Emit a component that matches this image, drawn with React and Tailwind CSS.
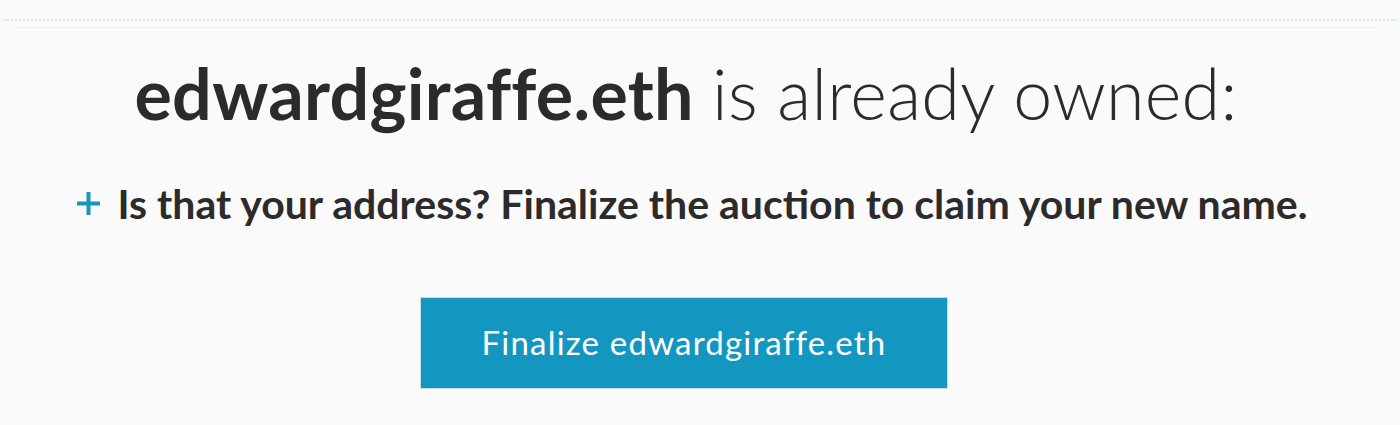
const PlusMark = () => (
  <svg width="23" height="23" viewBox="0 0 23 23" className="shrink-0">
    <rect x="9.5" y="0" width="4" height="23" fill="#1896c0" />
    <rect x="0" y="9.5" width="23" height="4" fill="#1896c0" />
  </svg>
)

const App = () => {
  return (
    <div className="w-[1400px] h-[425px] bg-[#fafafa] overflow-hidden font-['Lato','Liberation_Sans',sans-serif] text-[#2b2b2b]">
      {/* dotted rule */}
      <div className="pt-[19px] flex flex-col gap-[6px]">
        <div className="border-t-2 border-dotted border-[#d3e6ea] mx-[4px]" />
        <div className="border-t border-dotted border-[#dbeaec] mx-[18px]" />
      </div>

      <div className="flex flex-col items-center pr-[28px]">
        <h1 className="mt-[30px] text-[70px] leading-none tracking-[0.3px] whitespace-nowrap">
          <span className="font-bold">edwardgiraffe.eth</span>{' '}
          <span className="font-light">is already owned:</span>
        </h1>

        <div className="mt-[55px] flex items-center gap-[18px] pl-[12px]">
          <PlusMark />
          <p className="text-[41px] font-bold leading-none whitespace-nowrap">
            Is that your address? Finalize the auction to claim your new name.
          </p>
        </div>

        <button className="mt-[73px] w-[528px] h-[92px] bg-[#1397c1] text-white text-[33px] tracking-[1.2px] border border-[#c9dde3] -translate-x-[2px]">
          Finalize edwardgiraffe.eth
        </button>
      </div>
    </div>
  )
}

export default App
